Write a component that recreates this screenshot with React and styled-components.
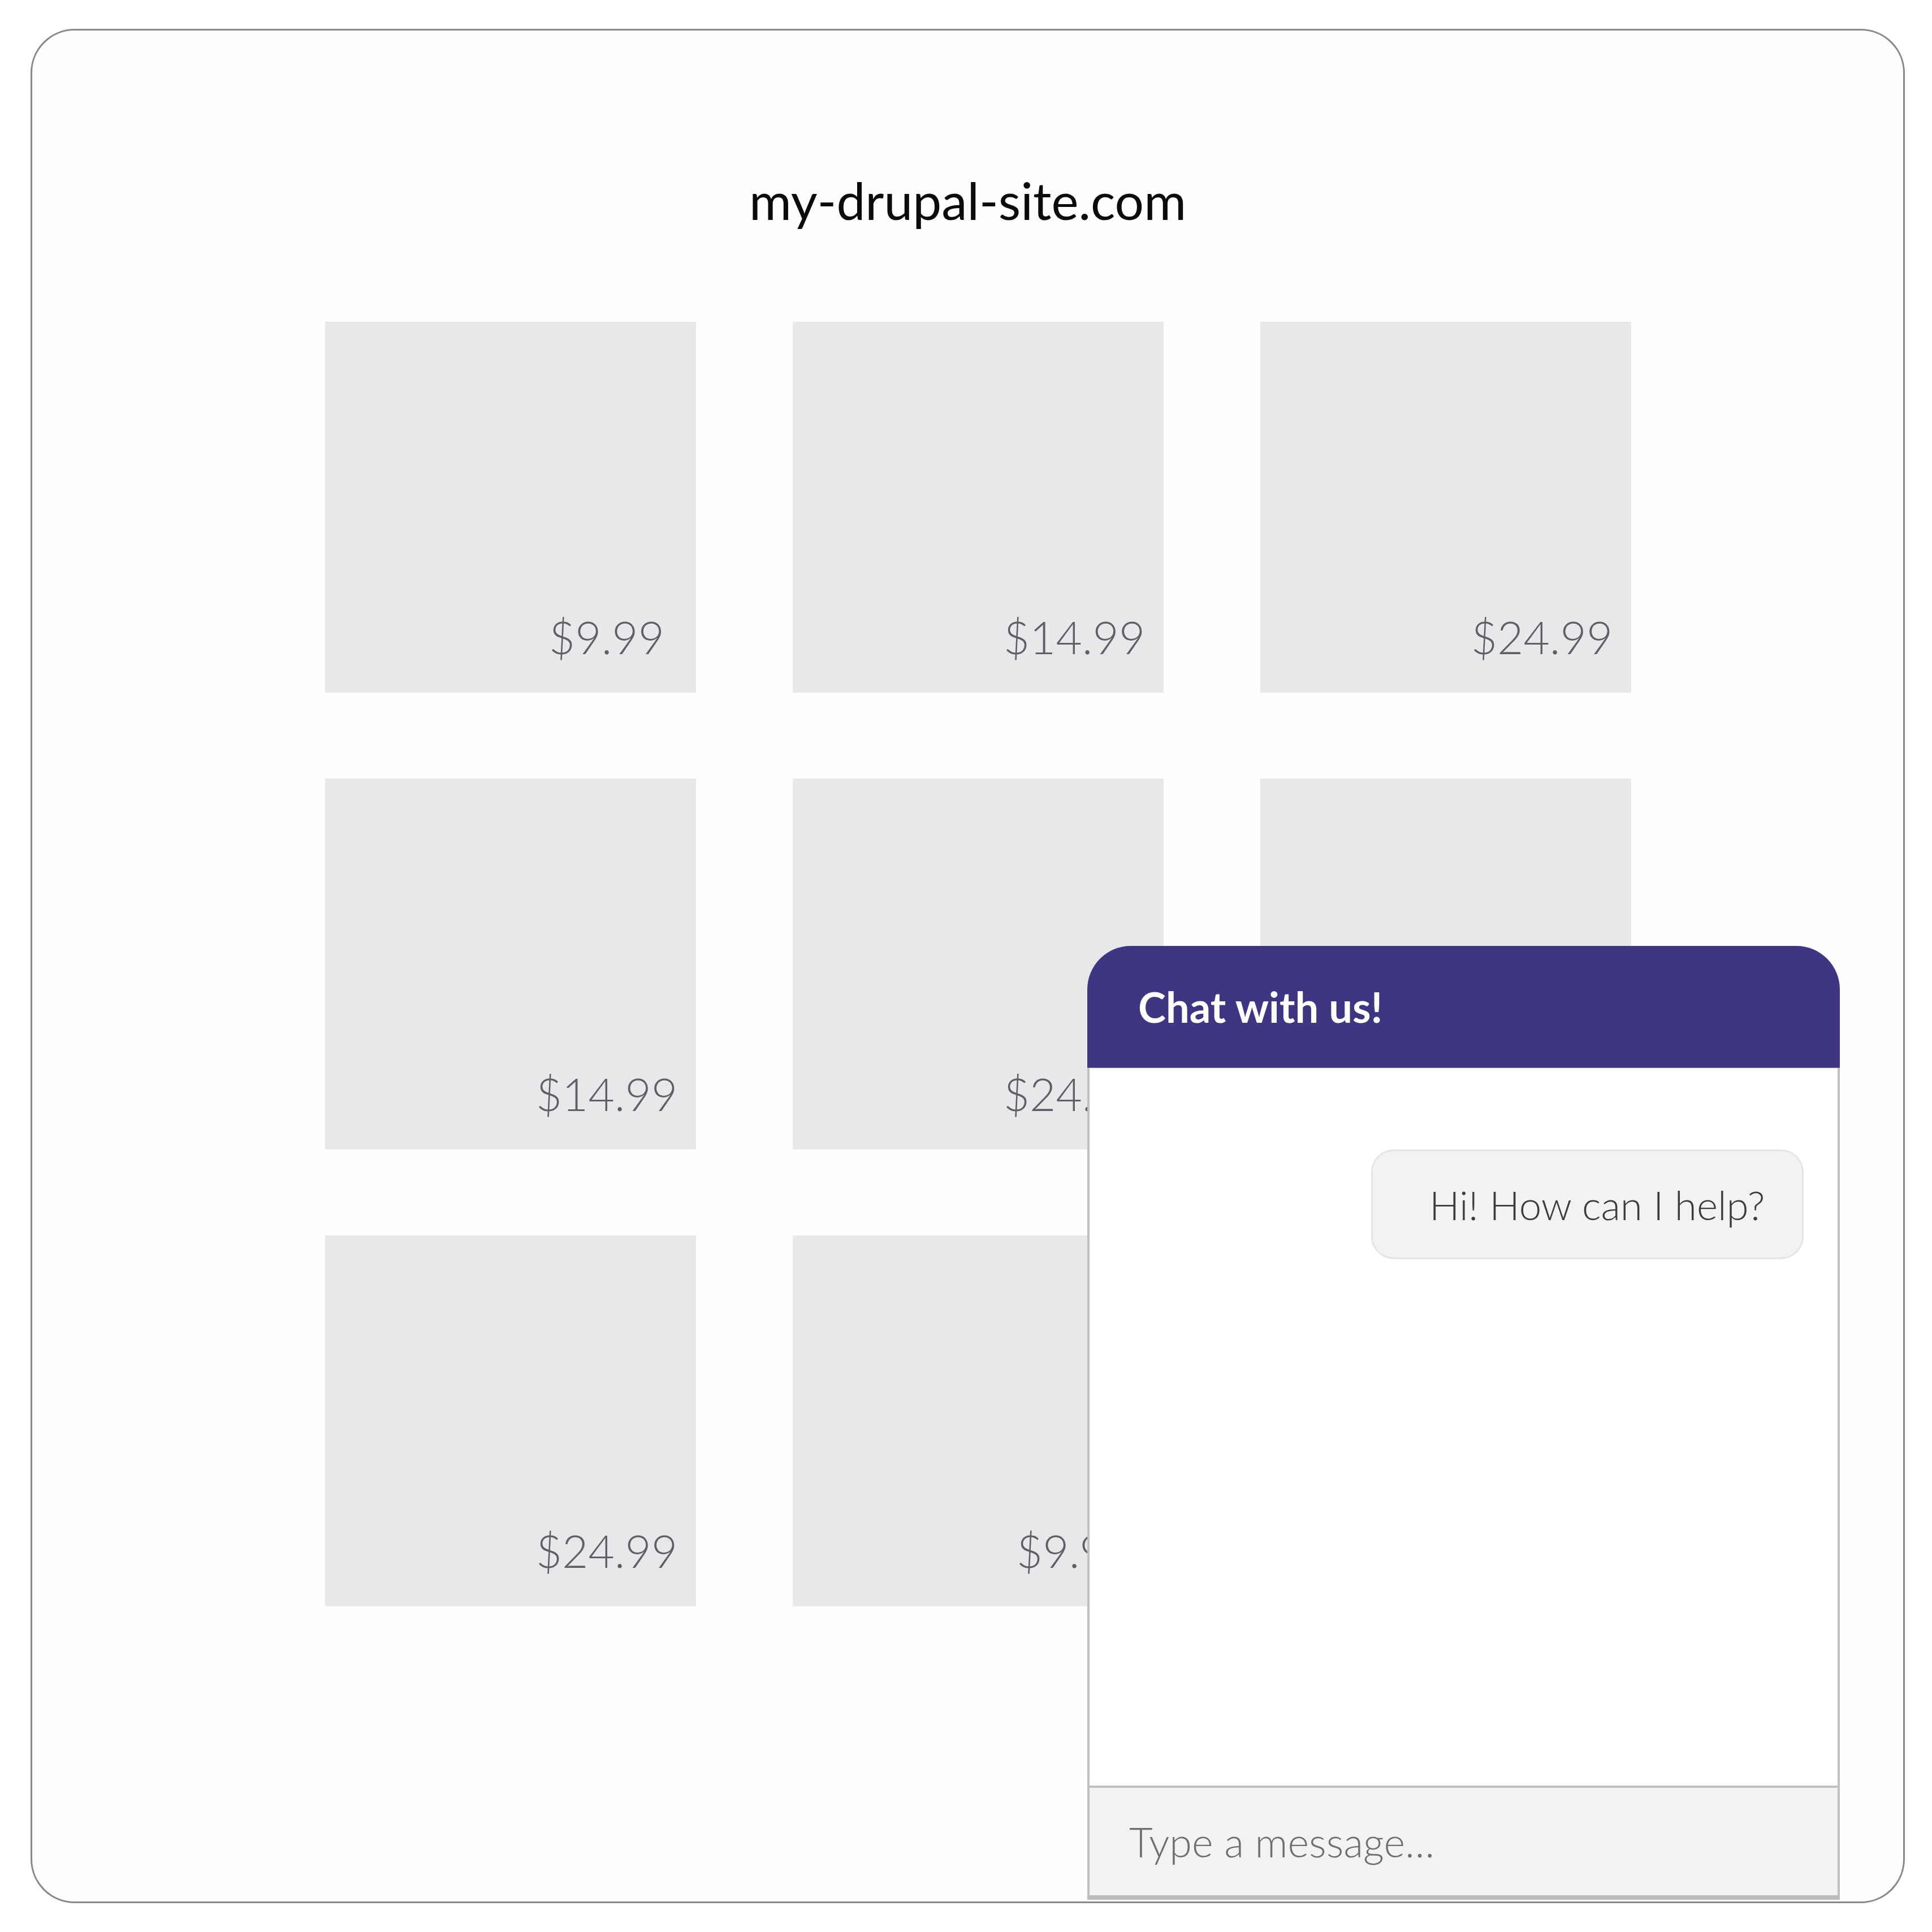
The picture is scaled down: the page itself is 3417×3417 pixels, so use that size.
import React from "react";
import styled, { createGlobalStyle } from "styled-components";

const GlobalStyle = createGlobalStyle`
  html, body {
    margin: 0;
    padding: 0;
    background: #ffffff;
  }
  body {
    font-family: "Lato", "Open Sans", sans-serif;
  }
`;

const Page = styled.div`
  width: 3417px;
  height: 3417px;
  padding: 51px 0 0 54px;
  box-sizing: border-box;
  background: #ffffff;
`;

const Frame = styled.div`
  position: relative;
  width: 3315px;
  height: 3315px;
  box-sizing: border-box;
  border: 3px solid #87888c;
  border-radius: 78px;
  background: #fefefe;
  display: flex;
  flex-direction: column;
  padding-top: 254px;
`;

const SiteTitle = styled.h1`
  margin: 0;
  font-family: "Lato", sans-serif;
  font-weight: 400;
  font-size: 91px;
  line-height: 1;
  color: #0b0b0b;
  text-align: center;
`;

const ProductGrid = styled.div`
  display: grid;
  grid-template-columns: repeat(3, 656px);
  grid-auto-rows: 656px;
  column-gap: 171px;
  row-gap: 152px;
  margin: 170px 0 0 518px;
`;

const Tile = styled.div`
  background: #e7e8ea;
  display: flex;
  align-items: flex-end;
`;

const Price = styled.span`
  flex: 1;
  padding: 0 0 59px 340px;
  text-align: center;
  font-family: "Lato", sans-serif;
  font-weight: 300;
  font-size: 80px;
  line-height: 1;
  color: #5f6063;
`;

const ChatWidget = styled.div`
  position: absolute;
  top: 1619px;
  left: 1866px;
  width: 1331px;
  height: 1687px;
  display: flex;
  flex-direction: column;
`;

const ChatHeader = styled.div`
  height: 216px;
  flex-shrink: 0;
  box-sizing: border-box;
  background: #3e3583;
  border-radius: 77px 77px 0 0;
  border-bottom: 1px solid #7b72b2;
  display: flex;
  align-items: center;
  padding-left: 90px;
  color: #ffffff;
  font-family: "Lato", sans-serif;
  font-weight: 700;
  font-size: 74px;
  line-height: 1;
`;

const ChatBody = styled.div`
  flex: 1;
  background: #ffffff;
  border-left: 4px solid #c0c0c2;
  border-right: 4px solid #c0c0c2;
  display: flex;
  flex-direction: column;
  align-items: flex-end;
  padding: 144px 60px 0 0;
`;

const Bubble = styled.div`
  width: 765px;
  height: 194px;
  box-sizing: border-box;
  background: #f2f2f2;
  border: 3px solid #e4e5e6;
  border-radius: 40px;
  display: flex;
  align-items: center;
  padding-left: 100px;
  font-family: "Lato", sans-serif;
  font-weight: 300;
  font-size: 71px;
  line-height: 1;
  color: #3b3b3d;
`;

const ChatInput = styled.div`
  height: 202px;
  flex-shrink: 0;
  box-sizing: border-box;
  background: #f2f2f2;
  border-top: 4px solid #c0c0c2;
  border-left: 4px solid #c0c0c2;
  border-right: 4px solid #c0c0c2;
  border-bottom: 8px solid #bbbcbe;
  display: flex;
  align-items: center;
  padding-left: 70px;
  font-family: "Lato", sans-serif;
  font-weight: 300;
  font-size: 72px;
  line-height: 1;
  color: #6e6e70;
`;

const products = [
  "$9.99", "$14.99", "$24.99",
  "$14.99", "$24.99", "$9.99",
  "$24.99", "$9.99", "$14.99",
];

export default function App() {
  return (
    <>
      <GlobalStyle />
      <Page>
        <Frame>
          <SiteTitle>my-drupal-site.com</SiteTitle>
          <ProductGrid>
            {products.map((price, i) => (
              <Tile key={i}>
                <Price>{price}</Price>
              </Tile>
            ))}
          </ProductGrid>
          <ChatWidget>
            <ChatHeader>Chat with us!</ChatHeader>
            <ChatBody>
              <Bubble>Hi! How can I help?</Bubble>
            </ChatBody>
            <ChatInput>Type a message…</ChatInput>
          </ChatWidget>
        </Frame>
      </Page>
    </>
  );
}
